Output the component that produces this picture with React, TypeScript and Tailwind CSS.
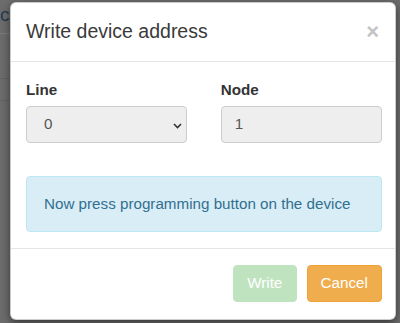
import React from "react";

export default function App() {
  return (
    <div
      className="relative w-[400px] h-[323px] overflow-hidden bg-[#6c6c6c]"
      style={{ fontFamily: '"Liberation Sans", Arial, sans-serif' }}
    >
      {/* underlying page, dimmed by the backdrop */}
      <div className="absolute left-0 top-[4px] text-[19px] leading-[22px] text-[#223d52]">cr</div>
      <div className="absolute left-0 top-[33px] w-[10px] h-px bg-[#7c7c7c]" />
      <div className="absolute left-0 top-[78px] w-[10px] h-px bg-[#626262]" />
      <div className="absolute left-0 top-[100px] w-[10px] h-px bg-[#626262]" />

      {/* modal */}
      <div className="absolute left-[10px] top-[2px] w-[386px] h-[318px] bg-white rounded-[6px] border border-black/20 shadow-[0_3px_9px_rgba(0,0,0,0.5)] flex flex-col">
        {/* header */}
        <div className="flex items-start justify-between h-[59px] pl-[15px] pr-[13px] pt-[15px] border-b border-[#e5e5e5]">
          <h4 className="text-[19.5px] leading-[27px] text-[#3a3a3a] font-normal">Write device address</h4>
          <span className="text-[22px] leading-[22px] font-bold text-[#c4c4c4] mt-[3px] mr-[3px]">×</span>
        </div>

        {/* body */}
        <div className="pl-[15px] pr-[13px] pt-[17px] pb-[16px]">
          <div className="grid grid-cols-2 gap-x-[33.5px]">
            <div>
              <label className="block text-[15.2px] leading-[21.7px] font-bold text-[#333] mb-[5.4px]">Line</label>
              <div className="relative h-[36.5px] rounded-[4px] border border-[#ccc] bg-[#eeeeee] flex items-center pl-[17px] text-[15.2px] text-[#555]">
                0
                <svg className="absolute right-[4px] top-[16px]" width="9" height="6" viewBox="0 0 9 6">
                  <path d="M1 1 L4.5 4.5 L8 1" fill="none" stroke="#333" strokeWidth="1.6" />
                </svg>
              </div>
            </div>
            <div>
              <label className="block text-[15.2px] leading-[21.7px] font-bold text-[#333] mb-[5.4px]">Node</label>
              <div className="h-[36.5px] rounded-[4px] border border-[#ccc] bg-[#eeeeee] flex items-center pl-[13px] text-[15.2px] text-[#555]">
                1
              </div>
            </div>
          </div>

          <div className="mt-[33.5px] h-[56px] rounded-[4px] border border-[#bce8f1] bg-[#d9edf7] px-[17px] py-[16px] text-[15.2px] leading-[21.7px] text-[#31708f]">
            Now press programming button on the device
          </div>
        </div>

        {/* footer */}
        <div className="border-t border-[#e5e5e5] pl-[15px] pr-[13px] pt-[16px] flex justify-end gap-[10px]">
          <button className="h-[36.5px] w-[63.5px] rounded-[4px] bg-[#bfe3bf] border border-[#bfe3bf] text-white text-[15.2px]">
            Write
          </button>
          <button className="h-[36.5px] w-[75.5px] rounded-[4px] bg-[#f0ad4e] border border-[#eea236] text-white text-[15.2px]">
            Cancel
          </button>
        </div>
      </div>
    </div>
  );
}
